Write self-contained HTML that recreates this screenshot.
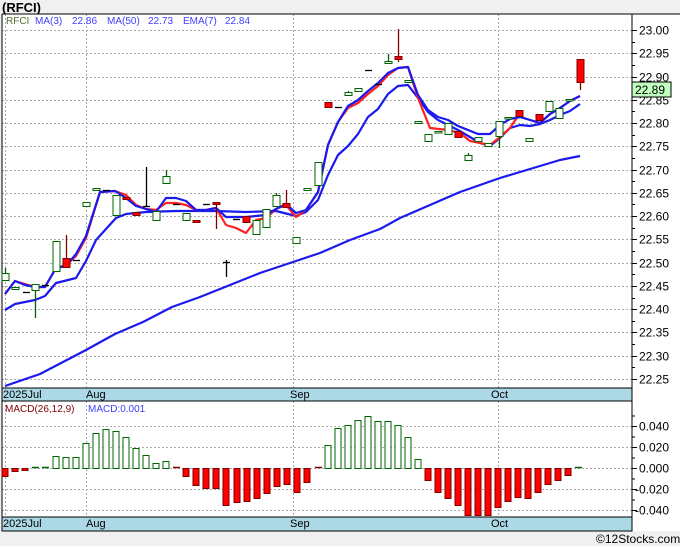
<!DOCTYPE html>
<html><head><meta charset="utf-8"><style>
html,body{margin:0;padding:0;background:#f0f0f0;}
svg{display:block;font-family:"Liberation Sans",sans-serif;}
</style></head><body>
<svg width="680" height="546" viewBox="0 0 680 546" xmlns="http://www.w3.org/2000/svg">
<rect x="0" y="0" width="680" height="546" fill="#f0f0f0"/>
<text x="2" y="12" font-size="13" font-weight="bold" fill="#000">(RFCI)</text>
<rect x="2" y="14" width="678" height="517" fill="#fff"/>
<!-- grids -->
<g stroke="#aaa" stroke-dasharray="2,2" stroke-width="1" id="grid"></g>
<!-- bands -->
<rect x="2" y="388" width="630" height="13" fill="#add8e6" stroke="#000"/>
<rect x="2" y="517" width="630" height="14" fill="#add8e6" stroke="#000"/>
<line x1="2" y1="14" x2="680" y2="14" stroke="#000"/>
<line x1="2" y1="14" x2="2" y2="531" stroke="#000"/>
<line x1="632" y1="14" x2="632" y2="531" stroke="#000"/>
<g font-size="11" fill="#000">
<text x="3" y="398">2025Jul</text><text x="86" y="398">Aug</text><text x="290" y="398">Sep</text><text x="491" y="398">Oct</text>
<text x="3" y="527">2025Jul</text><text x="86" y="527">Aug</text><text x="290" y="527">Sep</text><text x="491" y="527">Oct</text>
</g>
<g font-size="10">
<text x="6" y="24" fill="#556b2f">RFCI</text>
<text x="35" y="24" fill="#4040ff">MA(3)</text><text x="72" y="24" fill="#4040ff">22.86</text>
<text x="107" y="24" fill="#4040ff">MA(50)</text><text x="148" y="24" fill="#4040ff">22.73</text>
<text x="183" y="24" fill="#4040ff">EMA(7)</text><text x="225" y="24" fill="#4040ff">22.84</text>
<text x="5" y="412" fill="#800000">MACD(26,12,9)</text>
<text x="88" y="412" fill="#4040ff">MACD:0.001</text>
</g>
<g id="lines" fill="none" stroke-width="2.2" stroke-linejoin="round"></g>
<g id="candles"></g>
<g id="macd"></g>
<g id="axis" font-size="12" fill="#000"></g>
<rect x="632" y="82" width="39" height="15" fill="#c0ffc0" stroke="#000"/>
<text x="635" y="94" font-size="12">22.89</text>
<text x="596" y="543" font-size="12" fill="#000">©12Stocks.com</text>
</svg>
<script>
var NS="http://www.w3.org/2000/svg";
function el(p,t,a){var e=document.createElementNS(NS,t);for(var k in a)e.setAttribute(k,a[k]);p.appendChild(e);return e;}
var g=document.getElementById('grid'),ax=document.getElementById('axis');
function py(p){return 30+(23-p)*465.3;}
for(var i=0;i<=15;i++){var p=23-i*0.05,y=Math.round(py(p))+0.5;
 el(g,'line',{x1:2,y1:y,x2:632,y2:y});
 el(ax,'line',{x1:632,y1:y,x2:637,y2:y,stroke:'#000'});
 var m=Math.round(py(p+0.025))+0.5; if(i>0)el(ax,'line',{x1:632,y1:m,x2:635,y2:m,stroke:'#000'});
 el(ax,'text',{x:639,y:y+4}).textContent=p.toFixed(2);}
[5,86,293,498].forEach(function(x){el(g,'line',{x1:x+.5,y1:14,x2:x+.5,y2:388});el(g,'line',{x1:x+.5,y1:401,x2:x+.5,y2:517});});
[[426,'0.040'],[447,'0.020'],[468,'0.000'],[489,'-0.020'],[510,'-0.040']].forEach(function(a){var y=a[0]+.5;
 el(g,'line',{x1:2,y1:y,x2:632,y2:y});el(ax,'line',{x1:632,y1:y,x2:637,y2:y,stroke:'#000'});
 el(ax,'line',{x1:632,y1:y-10.5,x2:635,y2:y-10.5,stroke:'#000'});
 el(ax,'text',{x:a[1][0]=='-'?635:639,y:y+4}).textContent=a[1];});
// lines
var L=document.getElementById('lines');
function pl(c,pts){el(L,'polyline',{stroke:c,points:pts});}
pl('#1a1aee','5,386 40,374 86,350 115,334 143,322 172,307 200,297 230,285 260,273 290,263 320,253 350,240 380,229 400,218 430,205 460,192 500,178 540,166 560,160 580,156');
pl('#1a1aee','5,310 15,304 35,300 45,296 56,283 76,278 86,261 96,240 116,218 126,214 146,212 176,211 216,211 246,212 276,211 296,216 306,212 318,200 328,175 338,155 348,146 358,134 368,117 378,109 388,94 398,86 408,85 418,98 428,112 438,120 448,125 458,130 470,137 480,143 490,146 500,138 510,128 520,125 530,126 540,124 550,120 560,115 570,111 580,104');
pl('#ff2020','5,294 15,281 25,284 35,287 45,287 56,268 66,265 76,256 86,238 100,192 115,191 126,195 136,205 146,209 156,210 166,203 176,203 186,205 196,210 206,210 216,208 226,225 236,228 246,233 256,220 266,218 276,209 286,205 296,217 306,210 318,192 328,145 338,122 348,108 358,103 368,94 378,86 388,75 398,68 408,67 418,98 430,128 448,130 460,133 470,141 480,143 490,145 500,137 510,128 518,116 530,120 540,123 550,114 560,108 570,101 580,96');
pl('#1a1aee','5,294 15,281 25,285 35,287 45,287 56,268 66,266 76,254 86,236 100,192 115,191 126,198 136,206 146,209 156,212 166,198 176,198 186,201 196,210 206,210 216,208 226,217 236,217 246,217 256,216 266,215 276,209 286,204 296,213 306,210 318,192 328,145 338,122 348,106 358,100 368,91 378,83 388,73 398,68 408,67 418,95 428,110 438,117 448,120 458,126 468,130 478,134 490,134 500,125 510,119 520,117 530,120 540,123 550,114 560,108 570,101 580,96');
// candles [x,top,bot,wickTop,wickBot,type] type g=green hollow r=red d=dash(black)
var C=[[5,273,280,268,280,'g'],[15,287,289,287,289,'g'],[26,292,292,0,0,'d'],[35,284,290,284,318,'g'],[45,285,285,0,0,'d'],[56,241,271,241,271,'g'],[66,258,267,235,267,'r'],[76,260,260,0,0,'d'],[86,202,206,0,0,'g'],[96,188,190,0,0,'g'],[106,190,190,0,0,'d'],[116,195,215,0,0,'g'],[126,197,199,0,0,'r'],[136,212,215,0,0,'r'],[146,206,206,167,207,'d'],[156,211,220,0,0,'g'],[166,176,183,170,183,'g'],[176,204,204,0,0,'d'],[186,213,220,0,0,'g'],[196,220,222,0,0,'r'],[206,204,204,0,0,'d'],[216,202,204,202,229,'r'],[226,262,262,260,277,'d'],[236,219,219,0,0,'d'],[246,216,222,0,0,'r'],[256,220,234,0,0,'g'],[266,209,227,0,0,'g'],[276,195,206,193,206,'g'],[286,203,207,190,207,'r'],[296,237,243,0,0,'g'],[307,188,190,0,0,'g'],[318,162,185,0,0,'g'],[328,102,107,0,0,'r'],[338,107,107,0,0,'d'],[348,92,95,91,95,'g'],[358,88,91,0,0,'g'],[368,70,70,0,0,'d'],[378,84,84,0,0,'d'],[388,61,63,54,63,'g'],[398,56,59,29,62,'r'],[408,80,82,0,0,'g'],[418,121,123,0,0,'g'],[428,134,141,0,0,'g'],[438,131,132,0,0,'g'],[448,123,134,0,0,'g'],[458,131,137,0,0,'r'],[468,155,160,153,160,'g'],[478,137,141,0,0,'g'],[488,143,146,0,0,'g'],[499,121,136,121,148,'g'],[508,117,118,0,0,'g'],[519,110,116,0,0,'r'],[529,138,141,0,0,'g'],[539,114,120,0,0,'r'],[549,101,111,0,0,'g'],[559,108,118,0,0,'g'],[569,99,100,0,0,'g'],[580,59,82,59,90,'r']];
var CG=document.getElementById('candles');
C.forEach(function(c){var x=c[0],t=c[5];
 var col=t=='g'?'#006400':(t=='r'?'#800000':'#000');
 if(c[3]||c[4])el(CG,'line',{x1:x+.5,y1:c[3],x2:x+.5,y2:c[4],stroke:col,'stroke-width':1.3});
 if(t=='d'){el(CG,'line',{x1:x-3,y1:c[1]+.5,x2:x+4,y2:c[1]+.5,stroke:'#000','stroke-width':1.3});return;}
 el(CG,'rect',{x:x-3,y:c[1]+.5,width:7,height:Math.max(c[2]-c[1],1.5),fill:t=='g'?'#fff':'#ff0000',stroke:col,'stroke-width':1});
});
// macd
var M=[[5,476],[15,471],[25,470],[35,468],[45,468],[56,456],[66,457],[76,457],[86,443],[96,433],[106,429],[116,431],[126,437],[136,448],[146,455],[156,463],[166,461],[176,468],[186,476],[196,485],[206,488],[216,488],[226,505],[237,502],[247,501],[257,498],[267,493],[277,486],[287,484],[297,492],[307,482],[318,468],[328,445],[338,428],[348,425],[358,420],[368,416],[378,421],[388,421],[398,425],[408,437],[418,459],[428,480],[438,492],[448,498],[458,505],[468,515],[478,515],[488,515],[498,507],[508,501],[518,497],[528,498],[538,492],[548,484],[558,480],[568,475],[578,467]];
var MG=document.getElementById('macd');
M.forEach(function(m){var x=m[0],y=m[1];
 if(Math.abs(y-468)<2){el(MG,'line',{x1:x-3,y1:467.5,x2:x+4,y2:467.5,stroke:(x>170&&x<330)?'#800000':'#006400','stroke-width':1.5});return;}
 if(y<468)el(MG,'rect',{x:x-3,y:y+.5,width:6,height:468-y,fill:'#fff',stroke:'#006400'});
 else el(MG,'rect',{x:x-3,y:468.5,width:6,height:y-468,fill:'#ff0000',stroke:'#800000'});
});
</script>
</body></html>
